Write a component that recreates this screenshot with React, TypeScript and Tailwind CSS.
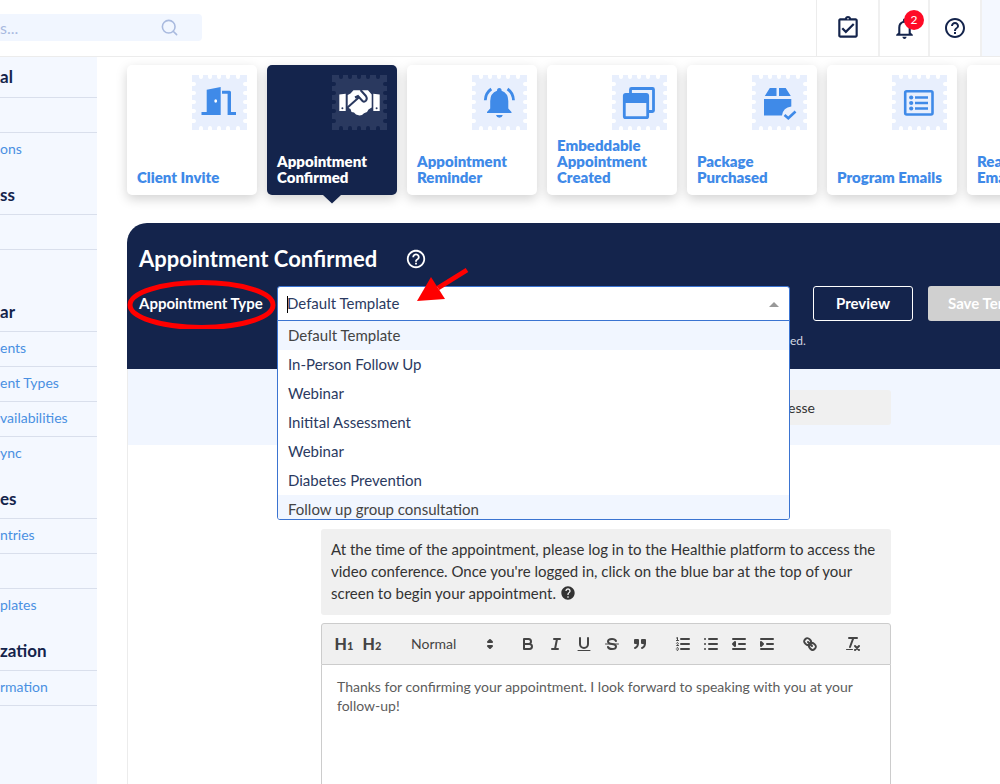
import React from "react";
import { Search } from "lucide-react";
import { MdHelp, MdHelpOutline, MdNotificationsNone, MdOutlineAssignmentTurnedIn } from "react-icons/md";

const notches = [9, 18, 27, 36, 46];

function Stamp({ active, children }: { active?: boolean; children: React.ReactNode }) {
  const d = notches
    .map((n) => `M${n} -1v3M${n} 56v-3M-1 ${n}h3M56 ${n}h-3`)
    .join("");
  return (
    <svg
      viewBox="0 0 55 55"
      aria-hidden="true"
      className={`h-[55px] w-[55px] self-end ${active ? "text-white" : "text-[#3f8ae8]"}`}
      fill="currentColor"
    >
      <rect width="55" height="55" fill={active ? "#2a395f" : "#e8effd"} />
      <path d={d} stroke={active ? "#14244c" : "#fff"} strokeWidth="4" strokeLinecap="round" />
      {children}
    </svg>
  );
}

const DoorIcon = () => (
  <g>
    <path d="M14.7 14.8 28.7 12V40H9.5V37H14.7Z" />
    <path d="M30 15.7H37.5Q39 15.7 39 17.2V37H44V40H35.6V18.7H30Z" />
    <ellipse cx="23.7" cy="26" rx="1.4" ry="1.8" fill="#fff" />
  </g>
);

const HandshakeIcon = () => (
  <g>
    <path d="M7.3 19.4 13.7 18.8V36H7.3ZM41.3 18.8 47.7 19.4V36H41.3Z" />
    <path d="M15.7 20 18.5 18.5 21.5 15.3H36L39.7 19.5V32.5L36.5 34.5 35 37 32 38.2 30 40 27.5 40.6 24 39.5 22 37.5 19.5 37 18.5 34 15.7 32.5Z" />
    <path
      d="M14.7 33.3 27.3 21.9M23 22.5 26 21 30.5 26Q32.2 27.4 34 25.6 35.600 23.400 33.900 21L28.500 15"
      fill="none"
      stroke="#2a395f"
      strokeWidth="2"
    />
    <circle cx="10.4" cy="33.2" r="1" fill="#2a395f" />
    <circle cx="44.6" cy="33.2" r="1" fill="#2a395f" />
  </g>
);

const BellIcon = () => (
  <g>
    <path d="M27.3 13q2.3 0 2.3 2.8Q36.3 18.3 36.3 26v7.5l3.2 3.5v1H15v-1l3.2-3.5V26Q18.2 18.3 25 15.8 25 13 27.3 13Z" />
    <path d="M24 40h6.8q-.8 2.8-3.4 2.8T24 40Z" />
    <path d="M19.3 14Q13.5 18 13.3 25.3M35.5 14Q41.300 18 41.500 25.3" fill="none" stroke="currentColor" strokeWidth="2.8" />
  </g>
);

const WindowsIcon = () => (
  <g>
    <path d="M18.500 18V14.500Q18.500 13.500 19.500 13.500H40.500Q41.500 13.500 41.500 14.500V35.500Q41.500 36.500 40.500 36.500H37" fill="none" stroke="currentColor" strokeWidth="2.800" />
    <rect x="12.300" y="19.300" width="23.400" height="23.400" rx="1.500" fill="none" stroke="currentColor" strokeWidth="2.800" />
    <path d="M12 19h24v9H12Z" />
  </g>
);

const PackageIcon = () => (
  <g>
    <path d="M17.800 13H24.500V21H12.800ZM27 13H33.700L38.800 21H27Z" />
    <path d="M12 24H39.300V31.500Q31 32.500 30 40.500H12Z" />
    <path d="M32.500 40 36.300 43.300 43.500 36.500" fill="none" stroke="currentColor" strokeWidth="2.600" />
  </g>
);

const ListIcon = () => (
  <g>
    <rect x="13.200" y="16.200" width="27.300" height="23.300" rx="1.500" fill="none" stroke="currentColor" strokeWidth="2.600" />
    <path d="M23 22.500H36M23 28H36M23 33.500H36" stroke="currentColor" strokeWidth="2.600" />
    <circle cx="19.200" cy="22.500" r="2.100" />
    <circle cx="19.200" cy="28" r="2.100" />
    <circle cx="19.200" cy="33.500" r="2.100" />
  </g>
);

const cards: { title: string; icon: React.ReactNode; active?: boolean }[] = [
  { title: "Client Invite", icon: <DoorIcon /> },
  { title: "Appointment Confirmed", icon: <HandshakeIcon />, active: true },
  { title: "Appointment Reminder", icon: <BellIcon /> },
  { title: "Embeddable Appointment Created", icon: <WindowsIcon /> },
  { title: "Package Purchased", icon: <PackageIcon /> },
  { title: "Program Emails", icon: <ListIcon /> },
  { title: "Reactivation Emails", icon: null },
];

type Row = { heading?: string; link?: string; last?: boolean };
const rows: Row[] = [
  {},
  { link: "ons", last: true },
  { heading: "ss" },
  {},
  { last: true },
  { heading: "ar" },
  { link: "ents" },
  { link: "ent Types" },
  { link: "vailabilities" },
  { link: "ync", last: true },
  { heading: "es" },
  { link: "ntries" },
  {},
  { link: "plates", last: true },
  { heading: "zation" },
  { link: "rmation" },
];

const options = [
  "Default Template",
  "In-Person Follow Up",
  "Webinar",
  "Initital Assessment",
  "Webinar",
  "Diabetes Prevention",
  "Follow up group consultation",
];

function Tool({ label, children }: { label: string; children: React.ReactNode }) {
  return (
    <button type="button" aria-label={label} className="flex h-6 w-7 items-center justify-center">
      <svg
        viewBox="0 0 18 18"
        className="h-[18px] w-[18px]"
        fill="none"
        stroke="currentColor"
        strokeWidth="2"
        strokeLinecap="round"
        strokeLinejoin="round"
      >
        {children}
      </svg>
    </button>
  );
}

function Toolbar() {
  return (
    <div role="toolbar" aria-label="Formatting" className="flex gap-[15px] rounded-t-[3px] border border-[#ccc] bg-[#f0f0f0] p-2 text-[#444]">
      <div className="flex">
        <button type="button" className="h-6 w-7 text-base font-black leading-6">
          H<span className="text-[11px]">1</span>
        </button>
        <button type="button" className="h-6 w-7 text-base font-black leading-6">
          H<span className="text-[11px]">2</span>
        </button>
      </div>
      <button type="button" aria-haspopup="listbox" className="flex h-6 w-[98px] items-center justify-between pl-[10px] text-sm">
        Normal
        <svg viewBox="0 0 18 18" className="h-[18px] w-[18px]" fill="currentColor" stroke="currentColor" strokeWidth="2" strokeLinejoin="round" aria-hidden="true">
          <path d="M7 11 9 13 11 11ZM7 7 9 5 11 7Z" />
        </svg>
      </button>
      <div className="flex">
        <Tool label="Bold">
          <path d="M5 4H9.500A2.500 2.500 0 0 1 9.500 9H5ZM5 9H10.500A2.500 2.500 0 0 1 10.500 14H5Z" />
        </Tool>
        <Tool label="Italic">
          <path d="M7 4H13M5 14H11M8 14 10 4" />
        </Tool>
        <Tool label="Underline">
          <path d="M5 3V9a4 4 0 0 0 8 0V3" />
          <path d="M3 15.500H15" strokeWidth="1" />
        </Tool>
        <Tool label="Strikethrough">
          <path d="M13 6C12.500 4.800 11 4 9 4 6.700 4 5 5.100 5 6.500 5 8.200 6.500 8.700 9 9S13 9.800 13 11.500C13 12.900 11.300 14 9 14 7 14 5.500 13.200 5 12" />
          <path d="M2.500 9H15.500" strokeWidth="1" />
        </Tool>
        <Tool label="Quote">
          <path d="M4 5h3v3H4ZM11 5h3v3h-3Z" fill="currentColor" />
          <path d="M7 8c0 4-3 5-3 5M14 8c0 4-3 5-3 5" />
        </Tool>
      </div>
      <div className="flex">
        <Tool label="Numbered list">
          <path d="M7 4H15M7 9H15M7 14H15" />
          <path
            d="M2.500 3 3.500 2.500V5.500M2.500 5.500H4.500M4.500 10.500h-2c0-.200 1.850-1.100 1.850-2.200a1 1 0 0 0-1.850-.100M2.500 14.850a1 1 0 0 0 1.850-.100.700.700 0 0 0-.600-.750.700.700 0 0 0 .600-.740 1 1 0 0 0-1.850-.100"
            strokeWidth="1"
          />
        </Tool>
        <Tool label="Bulleted list">
          <path d="M7 4H15M7 9H15M7 14H15M3 4h.010M3 9h.010M3 14h.010" />
        </Tool>
        <Tool label="Decrease indent">
          <path d="M3 4H15M9 9H15M3 14H15" />
          <path d="M5 7V11L3 9Z" fill="currentColor" />
        </Tool>
        <Tool label="Increase indent">
          <path d="M3 4H15M9 9H15M3 14H15" />
          <path d="M3 7V11L5 9Z" fill="currentColor" />
        </Tool>
      </div>
      <Tool label="Insert link">
        <path d="M7 7 11 11M8.900 4.577a3.476 3.476 0 0 1 .360 4.679A3.476 3.476 0 0 1 4.577 8.900C3.185 7.500 2.035 6.400 4.217 4.217S7.500 3.185 8.900 4.577ZM13.423 9.100a3.476 3.476 0 0 0-4.679-.360 3.476 3.476 0 0 0 .360 4.679c1.392 1.392 2.500 2.542 4.679.360S14.815 10.500 13.423 9.100Z" />
      </Tool>
      <Tool label="Clear formatting">
        <path d="M5 3H13M6 12 9.350 3M11 11 15 15M15 11 11 15" />
        <path d="M2.500 14.500H8.500" strokeWidth="1" />
      </Tool>
    </div>
  );
}

export default function App() {
  return (
    <div className="flex h-screen flex-col overflow-hidden bg-white font-['Lato',sans-serif] text-[#14244c]">
      <header className="flex h-[57px] shrink-0 items-stretch border-b border-[#ececec]">
        <div className="mt-[14px] flex h-[27px] w-[202px] items-center justify-between rounded-r-[4px] bg-[#f1f6ff] pr-[23px] text-[#a9badf]">
          <input type="search" aria-label="Search" placeholder="s..." className="w-32 bg-transparent text-base outline-none placeholder:text-[#a9badf]" />
          <Search className="h-[19px] w-[19px]" aria-hidden="true" />
        </div>
        <nav aria-label="Tools" className="ml-auto flex">
          <button type="button" aria-label="Tasks" className="flex w-[62px] items-center justify-center border-l border-[#ececec]">
            <MdOutlineAssignmentTurnedIn className="h-[26px] w-[26px]" />
          </button>
          <button type="button" aria-label="Notifications" className="relative flex w-[50px] items-center justify-center border-l-2 border-[#f0f0f0]">
            <MdNotificationsNone className="h-[25px] w-[25px]" />
            <span className="absolute left-6 top-[10px] h-5 w-5 rounded-full bg-[#ff0a26] text-center text-xs leading-5 text-white">2</span>
          </button>
          <button type="button" aria-label="Help" className="flex w-[52px] items-center justify-center border-l-2 border-[#f0f0f0]">
            <MdHelpOutline className="h-6 w-6" />
          </button>
          <div className="w-5 border-l-2 border-[#f0f0f0] bg-[#f4f8ff]" />
        </nav>
      </header>

      <div className="flex min-h-0 flex-1">
        <aside className="w-[97px] shrink-0 overflow-hidden bg-[#f4f8ff]">
          <h2 className="flex h-[41px] items-center border-b border-[#d9dfec] text-[17px] font-bold">al</h2>
          {rows.map((r, i) =>
            r.heading ? (
              <h2 key={i} className="flex h-[47px] items-center border-b border-[#d9dfec] pt-2 text-[17px] font-bold">
                {r.heading}
              </h2>
            ) : (
              <div key={i} className={`flex h-[35px] items-center border-b pb-[2px] text-sm text-[#4a90e2] ${r.last ? "border-transparent" : "border-[#d9dfec]"}`}>
                {r.link && <a href="#settings" className="whitespace-nowrap">{r.link}</a>}
              </div>
            ),
          )}
        </aside>

        <main className="flex min-w-0 flex-1 flex-col overflow-hidden pl-[30px]">
          <div className="-ml-[30px] flex shrink-0 gap-[10px] overflow-hidden pb-7 pl-[30px] pt-2">
            {cards.map((c) => (
              <button
                key={c.title}
                type="button"
                className={`relative flex h-[130px] w-[130px] shrink-0 flex-col justify-between rounded-[5px] p-[10px] text-left text-[15px] font-extrabold leading-4 shadow-[0_4px_12px_rgba(0,0,0,0.18)] ${
                  c.active ? "bg-[#14244c] text-white" : "bg-white text-[#3f8ae8]"
                }`}
              >
                {c.icon ? <Stamp active={c.active}>{c.icon}</Stamp> : <span />}
                {c.title}
                {c.active && (
                  <svg viewBox="0 0 18 9" className="absolute left-14 top-full h-[9px] w-[18px]" fill="#14244c" aria-hidden="true">
                    <path d="M0 0H18L9 8.500Z" />
                  </svg>
                )}
              </button>
            ))}
          </div>

          <section className="flex min-h-0 flex-1 flex-col">
            <div className="relative h-[146px] shrink-0 rounded-tl-[20px] bg-[#14244c] pl-3 pt-[21px] text-white">
              <div className="flex h-[30px] items-center gap-7">
                <h1 className="text-[22px] font-bold leading-[30px]">Appointment Confirmed</h1>
                <MdHelpOutline className="h-[22px] w-[22px]" aria-label="Help" />
              </div>
              <div className="mt-3 flex h-[35px] items-center">
                <label htmlFor="type" className="w-[138px] shrink-0 text-[15px] font-bold">
                  Appointment Type
                </label>
                <div className="relative z-10 w-[513px] shrink-0 text-[15px]">
                  <input
                    id="type"
                    role="combobox"
                    aria-expanded="true"
                    aria-controls="type-options"
                    defaultValue="Default Template"
                    className="block h-[35px] w-full rounded-t-[3px] border border-[#3b74d1] bg-white px-[9px] pb-[2px] text-[#2b3a61] outline-none"
                  />
                  <span className="absolute left-[10px] top-[10px] h-[17px] w-px bg-black" />
                  <svg viewBox="0 0 10 5" className="absolute right-[11px] top-4 h-[5px] w-[10px]" fill="#999" aria-hidden="true">
                    <path d="M0 5 5 0 10 5Z" />
                  </svg>
                  <ul
                    id="type-options"
                    role="listbox"
                    className="absolute left-0 top-[34px] h-[200px] w-full overflow-hidden rounded-b-[3px] border border-[#3b74d1] bg-white"
                  >
                    {options.map((o, i) => (
                      <li
                        key={i}
                        role="option"
                        aria-selected={i === 0}
                        className={`h-[29px] px-[10px] leading-[29px] ${i === 0 || i === 6 ? "bg-[#f1f6ff] text-[#444]" : "text-[#2b3a61]"}`}
                      >
                        {o}
                      </li>
                    ))}
                  </ul>
                </div>
                <button type="button" className="ml-[23px] h-[35px] w-[100px] shrink-0 rounded-[3px] border border-white text-[15px] font-bold">
                  Preview
                </button>
                <button type="button" disabled className="ml-[15px] h-[35px] shrink-0 whitespace-nowrap rounded-[3px] bg-[#d0d0d0] px-5 text-[15px] font-bold text-white">
                  Save Template
                </button>
              </div>
              <p className="mt-3 pl-[651px] text-xs leading-4 text-[#d5d9e2]">ed.</p>
              <svg viewBox="0 0 346 64" className="pointer-events-none absolute left-0 top-[42px] z-20 h-16 w-[346px]" fill="none" aria-hidden="true">
                <ellipse cx="74.500" cy="40" rx="71.500" ry="22.500" stroke="#f00" strokeWidth="5" />
                <path d="M340 5 311 23" stroke="#f00" strokeWidth="5" />
                <path d="M290 36 304 12 318 34Z" fill="#f00" />
              </svg>
            </div>

            <div className="flex min-h-0 flex-1 flex-col border-l border-[#ececec]">
              <div className="h-[76px] shrink-0 bg-[#f1f6ff] pl-[193px] pt-[21px]">
                <div className="h-[35px] w-[570px] rounded-[3px] bg-[#f0f0f0] pl-[467px] text-sm leading-[35px] text-[#333]">esse</div>
              </div>
              <div className="ml-[193px] mt-[84px] flex min-h-0 w-[570px] flex-1 flex-col">
                <p className="rounded-[3px] bg-[#f0f0f0] px-[10px] pb-[11px] pt-[9px] text-[15px] leading-[22px] text-[#333]">
                  At the time of the appointment, please log in to the Healthie platform to access the video conference. Once you're logged in, click on the blue bar at the top of your screen to begin your appointment.
                  <MdHelp className="ml-1 inline h-4 w-4 align-[-2px]" aria-label="Help" />
                </p>
                <div className="mt-2 flex min-h-0 flex-1 flex-col">
                  <Toolbar />
                  <textarea
                    aria-label="Message"
                    className="block min-h-0 flex-1 resize-none border-x border-[#ccc] px-[15px] py-3 text-sm leading-[19px] text-[#5c5c5c] outline-none"
                    defaultValue="Thanks for confirming your appointment. I look forward to speaking with you at your follow-up!"
                  />
                </div>
              </div>
            </div>
          </section>
        </main>
      </div>
    </div>
  );
}
